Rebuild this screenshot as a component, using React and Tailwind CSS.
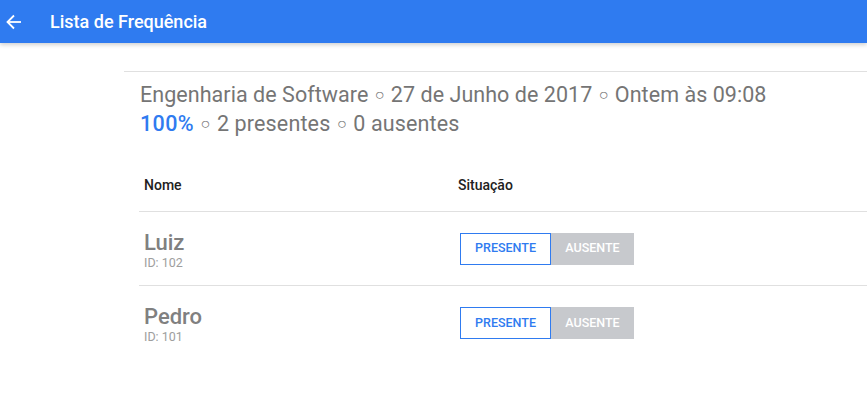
const students = [
  { name: "Luiz", id: 102 },
  { name: "Pedro", id: 101 },
];

function BackArrow() {
  return (
    <svg width="16" height="16" viewBox="0 0 16 16" fill="none" stroke="white" strokeWidth="1.8">
      <line x1="1.5" y1="8" x2="15" y2="8" />
      <polyline points="8,1.5 1.5,8 8,14.5" />
    </svg>
  );
}

function Dot() {
  return <span className="text-[16px] leading-none mx-[1px] align-[2px]">○</span>;
}

export default function App() {
  return (
    <div className="min-h-[403px] bg-white font-['Roboto',sans-serif]">
      <header className="h-[43px] bg-[#2f7bf0] flex items-center shadow-[0_2px_4px_rgba(0,0,0,0.18)]">
        <div className="w-[50px] pl-[6px] flex items-center">
          <BackArrow />
        </div>
        <h1 className="text-[18px] font-medium text-white leading-none">Lista de Frequência</h1>
      </header>

      <main className="ml-[124px] mt-[28px]">
        <div className="border-t border-[#e0e0e0] pl-[16px] pt-[8px]">
          <p className="h-[29px] text-[21.5px] leading-[29px] tracking-[0.05px] text-[#757575]">
            Engenharia de Software <Dot /> 27 de Junho de 2017 <Dot /> Ontem às 09:08
          </p>
          <p className="h-[29px] text-[21.5px] leading-[29px] tracking-[0.15px] text-[#757575]">
            <span className="text-[#2f7bf0] font-medium tracking-[0.4px]">100%</span> <Dot /> 2 presentes <Dot /> 0 ausentes
          </p>
        </div>

        <div className="ml-[15px] mt-[18px]">
          <div className="h-[56px] pt-[4px] flex items-center border-b border-[#e0e0e0] text-[14px] font-medium text-[#212121]">
            <div className="w-[319px] pl-[5px]">Nome</div>
            <div>Situação</div>
          </div>
          {students.map((s, i) => (
            <div
              key={s.id}
              className={`h-[74px] flex items-center ${i < students.length - 1 ? "border-b border-[#e0e0e0]" : ""}`}
            >
              <div className="w-[321px] pl-[5px] pt-[3px]">
                <div className="text-[22px] leading-[24px] font-medium text-[#808080]">{s.name}</div>
                <div className="text-[12.5px] leading-[15px] text-[#9e9e9e]">ID: {s.id}</div>
              </div>
              <div className="flex">
                <button className="w-[91px] h-[32px] border border-[#2f7bf0] text-[12.5px] font-medium text-[#2f7bf0] bg-white">
                  PRESENTE
                </button>
                <button className="w-[83px] h-[32px] bg-[#c7c9cd] text-[12.5px] font-medium text-white">
                  AUSENTE
                </button>
              </div>
            </div>
          ))}
        </div>
      </main>
    </div>
  );
}
